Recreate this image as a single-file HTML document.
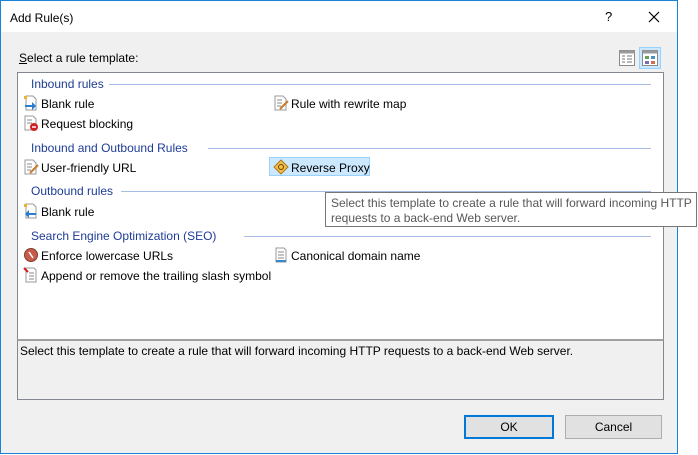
<!DOCTYPE html>
<html><head><meta charset="utf-8"><style>
*{margin:0;padding:0;box-sizing:border-box}
body{width:698px;height:455px;background:#fff;font-family:"Liberation Sans",sans-serif;font-size:12px;color:#000;position:relative;overflow:hidden}
.win{position:absolute;left:0;top:0;width:678px;height:454px;border:1px solid #1883d7;background:#f0f0f0}
.title{position:absolute;left:0;top:0;width:676px;height:31px;background:#fff}
.t{position:absolute;white-space:nowrap;line-height:14px}
.list{position:absolute;left:16px;top:71px;width:647px;height:268px;background:#fff;border:1px solid #828790;border-bottom:none}
.in{position:absolute;left:0;top:-1px;width:100%;height:100%}
.desc{position:absolute;left:16px;top:338px;width:647px;height:61px;background:#f0f0f0;border:1px solid #828790;border-top:2px solid #a0a0a0}
.hdr{position:absolute;left:13px;color:#1e3c96;white-space:nowrap;line-height:14px}
.ln{position:absolute;height:1px;background:#a8bce4;right:12px}
.it{position:absolute;white-space:nowrap;line-height:14px}
.ic{position:absolute;width:16px;height:16px}
.btn{position:absolute;top:414px;height:24px;background:#e1e1e1;border:1px solid #adadad;text-align:center;line-height:22px}
.tip{position:absolute;left:325px;top:192px;width:372px;height:35px;background:#fff;border:1px solid #767676;padding:3px 0 0 5px;line-height:15px;color:#575757;font-size:12px}
</style></head><body>
<div class="win">
 <div class="title"></div>
 <div class="t" style="left:9px;top:10px;font-size:12px">Add Rule(s)</div>
 <div class="t" style="left:604px;top:9px;font-size:13px">?</div>
 <svg style="position:absolute;left:647px;top:10px" width="12" height="12"><path d="M1 1L11 11M11 1L1 11" stroke="#000" stroke-width="1.2"/></svg>
 <div class="t" style="left:18px;top:50px"><u>S</u>elect a rule template:</div>
 <svg style="position:absolute;left:617px;top:48px" width="18" height="18"><rect x="1.5" y="1.5" width="15" height="15" fill="#fff" stroke="#8a8a8a"/><rect x="1.5" y="1.5" width="15" height="3" fill="#9a9a9a"/><path d="M4 7h3M4 10h3M4 13h3M9 7h5M9 10h5M9 13h5" stroke="#777"/></svg>
 <div style="position:absolute;left:638px;top:46px;width:22px;height:22px;background:#cce8ff;border:1px solid #99d1ff"></div>
 <svg style="position:absolute;left:640px;top:48px" width="18" height="18"><rect x="1.5" y="1.5" width="15" height="15" fill="#fff" stroke="#8a8a8a"/><rect x="1.5" y="1.5" width="15" height="3" fill="#9a9a9a"/><rect x="4" y="7" width="4" height="3" fill="#6a9f5a"/><rect x="10" y="7" width="4" height="3" fill="#4a90c8"/><rect x="4" y="12" width="4" height="3" fill="#7a6ab8"/><rect x="10" y="12" width="4" height="3" fill="#d0704a"/></svg>
 <div class="list"><div class="in">
  <div class="hdr" style="top:5px">Inbound rules</div><div class="ln" style="left:91px;top:12px"></div>
  <svg class="ic" style="left:5px;top:23px"><path d="M3 1h7l3 3v11H3z" fill="#fff" stroke="#999"/><rect x="1" y="1" width="3" height="3" fill="#f0b030"/><path d="M2 10h7V7l4 4-4 4v-3H2z" fill="#2a7dd0"/></svg>
  <div class="it" style="left:23px;top:25px">Blank rule</div>
  <svg class="ic" style="left:255px;top:23px"><path d="M2 1h8l3 3v11H2z" fill="#fff" stroke="#999"/><path d="M4 5h5M4 8h5M4 11h4" stroke="#888"/><path d="M7 14l8-8" stroke="#c87a30" stroke-width="2"/></svg>
  <div class="it" style="left:273px;top:25px">Rule with rewrite map</div>
  <svg class="ic" style="left:5px;top:43px"><path d="M2 1h8l3 3v11H2z" fill="#fff" stroke="#999"/><path d="M4 5h5M4 8h5" stroke="#888"/><circle cx="11" cy="12" r="4" fill="#d02020"/><path d="M9 12h4" stroke="#fff" stroke-width="1.5"/></svg>
  <div class="it" style="left:23px;top:45px">Request blocking</div>
  <div class="hdr" style="top:69px">Inbound and Outbound Rules</div><div class="ln" style="left:190px;top:76px"></div>
  <svg class="ic" style="left:5px;top:87px"><path d="M2 1h8l3 3v11H2z" fill="#fff" stroke="#999"/><path d="M4 5h5M4 8h5M4 11h4" stroke="#888"/><path d="M7 14l8-8" stroke="#c87a30" stroke-width="2"/></svg>
  <div class="it" style="left:23px;top:89px">User-friendly URL</div>
  <div style="position:absolute;left:251px;top:85px;width:101px;height:19px;background:#cce8ff;border:1px solid #99d1ff"></div>
  <svg class="ic" style="left:255px;top:87px"><path d="M8 1l7 7-7 7-7-7z" fill="#f0c040" stroke="#b07820"/><circle cx="8" cy="8" r="2.5" fill="none" stroke="#704010"/></svg>
  <div class="it" style="left:273px;top:89px">Reverse Proxy</div>
  <div class="hdr" style="top:112px">Outbound rules</div><div class="ln" style="left:103px;top:119px"></div>
  <svg class="ic" style="left:5px;top:131px"><path d="M3 1h7l3 3v11H3z" fill="#fff" stroke="#999"/><rect x="1" y="1" width="3" height="3" fill="#f0b030"/><path d="M13 10H6V7l-4 4 4 4v-3h7z" fill="#2a7dd0"/></svg>
  <div class="it" style="left:23px;top:133px">Blank rule</div>
  <div class="hdr" style="top:157px">Search Engine Optimization (SEO)</div><div class="ln" style="left:226px;top:164px"></div>
  <svg class="ic" style="left:5px;top:175px"><circle cx="8" cy="8" r="6.5" fill="#c85a4a" stroke="#804030"/><path d="M6 5l4 6" stroke="#fff" stroke-width="1.5"/></svg>
  <div class="it" style="left:23px;top:177px">Enforce lowercase URLs</div>
  <svg class="ic" style="left:255px;top:175px"><path d="M3 1h8l2 2v12H3z" fill="#fff" stroke="#999"/><path d="M5 5h6M5 8h6M5 11h6" stroke="#888"/><rect x="3" y="13" width="10" height="2" fill="#3a88c8"/></svg>
  <div class="it" style="left:273px;top:177px">Canonical domain name</div>
  <svg class="ic" style="left:5px;top:195px"><path d="M3 1h8l2 2v12H3z" fill="#fff" stroke="#999"/><path d="M6 6h5M6 9h5M6 12h5" stroke="#888"/><path d="M1 1l4 4" stroke="#d02020" stroke-width="2"/></svg>
  <div class="it" style="left:23px;top:197px">Append or remove the trailing slash symbol</div>
 </div></div>
 <div class="desc"><div class="t" style="left:2px;top:3px">Select this template to create a rule that will forward incoming HTTP requests to a back-end Web server.</div></div>
 <div class="btn" style="left:463px;width:90px;border:2px solid #0078d7;line-height:20px">OK</div>
 <div class="btn" style="left:564px;width:97px">Cancel</div>
</div>
<div class="tip">Select this template to create a rule that will forward incoming HTTP<br>requests to a back-end Web server.</div>
</body></html>
